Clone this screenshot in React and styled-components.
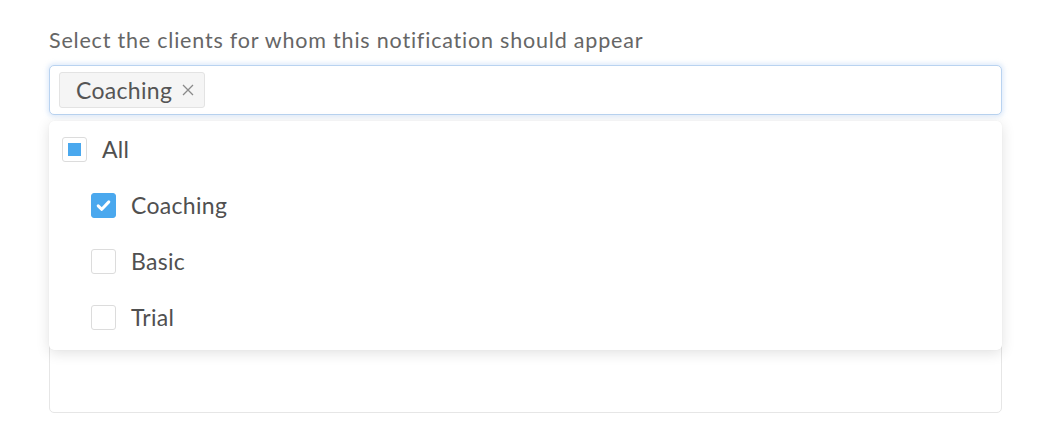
import React, {useState} from 'react';
import styled, {createGlobalStyle} from 'styled-components';

const GlobalStyle = createGlobalStyle`
    html, body {
        margin: 0;
        padding: 0;
        background: #ffffff;
        font-family: Lato, "Open Sans", sans-serif;
    }
`;

const Page = styled.div`
    width: 1044px;
    height: 422px;
    padding: 26px 42px 0 49px;
    box-sizing: border-box;
`;

const Label = styled.div`
    font-size: 21.5px;
    letter-spacing: 0.8px;
    color: #666666;
    line-height: 28px;
    margin-bottom: 11px;
`;

const Field = styled.div`
    position: relative;
    width: 953px;
`;

const Input = styled.div`
    height: 50px;
    box-sizing: border-box;
    border: 1px solid #b9d3f0;
    border-radius: 5px;
    box-shadow: 0 0 4px 2px rgba(170, 200, 240, 0.35);
    display: flex;
    align-items: center;
    padding: 0 9px;
    background: #fff;
`;

const Tag = styled.div`
    height: 36px;
    box-sizing: border-box;
    display: flex;
    align-items: center;
    gap: 10px;
    padding: 0 10px 0 16px;
    background: #f5f5f5;
    border: 1px solid #e3e3e3;
    border-radius: 3px;
    font-size: 23px;
    letter-spacing: 0.3px;
    color: #555555;
`;

const Close = styled.span`
    display: flex;
    cursor: pointer;
`;

const Textarea = styled.div`
    margin-top: 16px;
    height: 282px;
    box-sizing: border-box;
    border: 1px solid #e6e6e6;
    border-radius: 5px;
`;

const Dropdown = styled.div`
    position: absolute;
    top: 56px;
    left: 0;
    right: 0;
    background: #fff;
    border-radius: 5px;
    box-shadow: 0 3px 14px rgba(0, 0, 0, 0.12), 0 0 1px rgba(0, 0, 0, 0.08);
    padding: 0 0 5px;
`;

const Option = styled.div`
    height: 56px;
    display: flex;
    align-items: center;
    gap: 15px;
    padding-left: ${p => (p.$child ? 42 : 13)}px;
    font-size: 23px;
    letter-spacing: 0.3px;
    color: #505050;
    cursor: pointer;
`;

const Box = styled.div`
    width: 25px;
    height: 25px;
    box-sizing: border-box;
    border-radius: 3px;
    border: 1px solid ${p => (p.$checked ? '#4aa8ee' : '#dcdcdc')};
    background: ${p => (p.$checked ? '#4aa8ee' : '#fff')};
    display: flex;
    align-items: center;
    justify-content: center;
`;

const Partial = styled.div`
    width: 13px;
    height: 13px;
    background: #4aa8ee;
`;

const Check = () => (
    <svg width="17" height="17" viewBox="0 0 16 16">
        <path d="M3 8.3 L6.4 11.6 L13 4.6" fill="none" stroke="#fff" strokeWidth="2.8" strokeLinecap="round" strokeLinejoin="round" />
    </svg>
);

const Cross = () => (
    <svg width="12" height="12" viewBox="0 0 12 12">
        <path d="M1 1 L11 11 M11 1 L1 11" stroke="#8a8a8a" strokeWidth="1.3" />
    </svg>
);

const clients = ['Coaching', 'Basic', 'Trial'];

const App = () => {
    const [selected, setSelected] = useState(['Coaching']);

    const toggle = (name) => {
        setSelected(s => (s.includes(name) ? s.filter(n => n !== name) : [...s, name]));
    };

    return (
        <Page>
            <GlobalStyle />
            <Label>Select the clients for whom this notification should appear</Label>
            <Field>
                <Input>
                    {selected.map(name =>
                        <Tag key={name}>
                            {name}
                            <Close onClick={() => toggle(name)}><Cross /></Close>
                        </Tag>
                    )}
                </Input>
                <Textarea />
                <Dropdown>
                    <Option>
                        <Box>
                            {selected.length > 0 && <Partial />}
                        </Box>
                        All
                    </Option>
                    {clients.map(name =>
                        <Option $child key={name} onClick={() => toggle(name)}>
                            <Box $checked={selected.includes(name)}>
                                {selected.includes(name) && <Check />}
                            </Box>
                            {name}
                        </Option>
                    )}
                </Dropdown>
            </Field>
        </Page>
    );
};

export default App;
